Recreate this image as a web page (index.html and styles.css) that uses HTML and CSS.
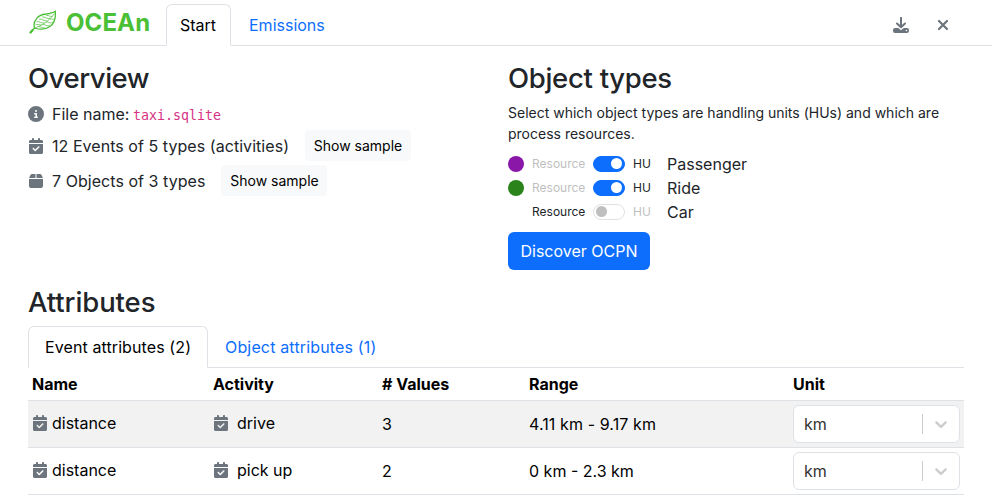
FILE: index.html
```html
<!DOCTYPE html>
<html lang="en">
<head>
<meta charset="utf-8">
<title>OCEAn</title>
<link rel="stylesheet" href="styles.css">
</head>
<body>
<svg class="defs" aria-hidden="true">
  <symbol id="calendar" viewBox="0 0 448 512"><path d="M128 0c17.700 0 32 14.300 32 32V64H288V32c0-17.700 14.300-32 32-32s32 14.300 32 32V64h48c26.500 0 48 21.500 48 48v48H0V112C0 85.500 21.500 64 48 64H96V32c0-17.700 14.300-32 32-32zM0 192H448V464c0 26.500-21.500 48-48 48H48c-26.500 0-48-21.500-48-48V192zM329 305c9.400-9.400 9.400-24.600 0-33.900s-24.600-9.400-33.900 0l-95 95-47-47c-9.400-9.400-24.600-9.400-33.900 0s-9.400 24.600 0 33.900l64 64c9.400 9.400 24.600 9.400 33.900 0L329 305z"/></symbol>
  <symbol id="chevron" viewBox="0 0 20 20"><path d="M4.516 7.548c0.436-0.446 1.043-0.481 1.576 0l3.908 3.747 3.908-3.747c0.533-0.481 1.141-0.446 1.574 0 0.436 0.445 0.408 1.197 0 1.615-0.406 0.418-4.695 4.502-4.695 4.502-0.217 0.223-0.502 0.335-0.787 0.335s-0.570-0.112-0.789-0.335c0 0-4.287-4.084-4.695-4.502s-0.436-1.170 0-1.615z"/></symbol>
</svg>
<header class="topbar">
  <div class="brand">
    <svg class="leaf" viewBox="0 0 28 24"><path class="outline" d="M1.500 22.500 5.500 18M5.500 18C3.500 11 9 4.500 17 4 21 3.500 24 2.800 26.200 1.200 27 8 26 13 21 16.500 16 20 10 19.500 5.500 18Z"/><path class="stem" d="M1.500 22.500 3.500 20.200"/><path class="veins" d="M5.500 18C12 16 20 11.500 25 4M7 14.500C9 14 10 15 12 15M8 11.500C10 11 12 13.500 15 13M10.500 9C13 8.500 15 11.500 18 11M13.500 6.800C16 6.500 18 9.500 21 8.500M17.500 5.500C20 5 21 7 23 6.500M10 16.500C12 16.500 13 18.500 16 18M14 14.500C16 14 18 17 20.500 15.500M18 12C20 11.500 21 14.500 24 12M21.500 9C23 8.500 24 10 25.800 9"/></svg>
    <span>OCEAn</span>
  </div>
  <nav class="main-tabs"><a class="main-tab active">Start</a><a class="main-tab">Emissions</a></nav>
  <div class="actions">
    <svg class="download" viewBox="0 0 16 16"><path class="line" d="M8 .8V9.500M4 6.500 8 10.300 12 6.500"/><path d="M2 11H5.200L8 13.200 10.800 11H14a2 2 0 0 1 2 2v1a2 2 0 0 1-2 2H2a2 2 0 0 1-2-2v-1a2 2 0 0 1 2-2zM13.500 12.700a.8.800 0 1 0 0 1.600.8.800 0 0 0 0-1.600z"/></svg>
    <svg class="close" viewBox="0 0 12 12"><path d="M2 2 10 10M10 2 2 10"/></svg>
  </div>
</header>
<main>
  <div class="columns">
    <section>
      <h2 class="overview">Overview</h2>
      <div class="info file"><svg class="icon" viewBox="0 0 512 512"><path d="M256 512A256 256 0 1 0 256 0a256 256 0 1 0 0 512zM216 336h24V272H216c-13.300 0-24-10.700-24-24s10.700-24 24-24h48c13.300 0 24 10.700 24 24v88h8c13.300 0 24 10.700 24 24s-10.700 24-24 24H216c-13.300 0-24-10.700-24-24s10.700-24 24-24zm40-208a32 32 0 1 1 0 64 32 32 0 1 1 0-64z"/></svg><span>File name: <code>taxi.sqlite</code></span></div>
      <div class="info"><span class="count"><svg class="icon"><use href="#calendar"/></svg>12 Events of 5 types (activities)</span><button class="sample">Show sample</button></div>
      <div class="info"><span class="count"><svg class="icon" viewBox="0 0 448 512"><path d="M50.700 58.500 0 160H208V32H93.200c-18.200 0-34.400 10.300-42.500 26.500zM240 160H448L397.300 58.500C389.200 42.300 373 32 354.800 32H240V160zM448 192H0V416c0 35.300 28.700 64 64 64H384c35.300 0 64-28.700 64-64V192z"/></svg>7 Objects of 3 types</span><button class="sample">Show sample</button></div>
    </section>
    <section>
      <h2 class="types">Object types</h2>
      <p class="hint">Select which object types are handling units (HUs) and which are process resources.</p>
      <div class="type"><i class="dot purple"></i><span class="role off">Resource</span><i class="switch on"></i><span class="role hu">HU</span><span>Passenger</span></div>
      <div class="type"><i class="dot green"></i><span class="role off">Resource</span><i class="switch on"></i><span class="role hu">HU</span><span>Ride</span></div>
      <div class="type"><i class="dot"></i><span class="role">Resource</span><i class="switch"></i><span class="role hu off">HU</span><span>Car</span></div>
      <button class="primary">Discover OCPN</button>
    </section>
  </div>
  <section>
    <h2 class="attributes">Attributes</h2>
    <nav class="tabs"><a class="tab active">Event attributes (2)</a><a class="tab">Object attributes (1)</a></nav>
    <table>
      <colgroup><col class="c-name"><col class="c-activity"><col class="c-values"><col class="c-range"><col></colgroup>
      <thead><tr><th>Name</th><th>Activity</th><th># Values</th><th>Range</th><th>Unit</th></tr></thead>
      <tbody>
        <tr class="striped"><td><div class="cell"><svg class="icon"><use href="#calendar"/></svg>distance</div></td><td><div class="cell wide"><svg class="icon"><use href="#calendar"/></svg>drive</div></td><td>3</td><td class="range">4.11 km - 9.17 km</td><td><div class="select"><span>km</span><svg class="chevron"><use href="#chevron"/></svg></div></td></tr>
        <tr><td><div class="cell"><svg class="icon"><use href="#calendar"/></svg>distance</div></td><td><div class="cell wide"><svg class="icon"><use href="#calendar"/></svg>pick up</div></td><td>2</td><td>0 km - 2.3 km</td><td><div class="select"><span>km</span><svg class="chevron"><use href="#chevron"/></svg></div></td></tr>
      </tbody>
    </table>
  </section>
</main>
</body>
</html>
```
FILE: styles.css
```css
* { box-sizing: border-box; }
body { margin: 0; font: 16px/24px Inter, sans-serif; color: #212529; background: #fff; overflow: hidden; }
.defs { display: none; }
.topbar { height: 46px; border-bottom: 1px solid #dee2e6; display: flex; padding: 4px 28px 0; }
.brand { width: 138px; height: 37px; display: flex; align-items: center; color: #4bbf36; font-size: 24px; font-weight: 700; gap: 9px; }
.brand span { letter-spacing: .1px; }
.leaf { width: 28px; height: 24px; margin: -2px 0 0 1px; fill: none; stroke: #4bbf36; stroke-linecap: round; }
.outline { stroke-width: 1.300; }
.stem { stroke-width: 2.200; }
.veins { stroke-width: .7; }
.main-tabs { display: flex; height: 42px; }
.main-tab { padding: 8px 17px; border: 1px solid transparent; color: #0d6efd; }
.main-tab.active, .tab.active { color: #000; background: #fff; border-color: #dee2e6 #dee2e6 #fff; }
.main-tab.active { width: 65px; padding: 8px 13px; border-radius: 6px 6px 0 0; }
.actions { margin-left: auto; display: flex; align-items: center; gap: 28px; height: 42px; padding-right: 15px; fill: #6c757d; }
.download { width: 16px; height: 16px; fill-rule: evenodd; }
.line { fill: none; stroke: #6c757d; stroke-width: 2; stroke-linecap: round; stroke-linejoin: round; }
.close { width: 12px; height: 12px; stroke: #6c757d; stroke-width: 2.2; stroke-linecap: round; }
main { padding: 16px 28px 0; }
h2 { margin: 0 0 8px; font-size: 27.500px; line-height: 33.600px; font-weight: 450; }
.overview { letter-spacing: -.45px; }
.types { letter-spacing: -.3px; }
.attributes { letter-spacing: -.1px; margin-bottom: 6px; }
.columns { display: grid; grid-template-columns: 480px 1fr; height: 224px; }
.info { display: flex; align-items: center; height: 31px; margin-bottom: 4px; }
.info.file { height: 24px; margin: -2px 0 4px; }
.count { display: flex; align-items: center; padding-top: 2px; letter-spacing: .05px; }
.icon { width: 16px; height: 16px; fill: #6c757d; margin-right: 8px; flex: none; }
code { font: 13.300px "DejaVu Sans Mono", monospace; color: #d63384; margin-left: -1px; }
button { font-family: inherit; border: 0; }
.sample { width: 106px; height: 31px; padding: 0; margin-left: 16px; border-radius: 4px; font-size: 14px; background: #f8f9fa; color: #000; }
.hint { margin: -2px 0 8px; font-size: 14px; line-height: 21px; }
.type { display: flex; align-items: center; height: 24px; }
.dot { width: 16px; height: 16px; border-radius: 50%; margin-right: 8px; }
.purple { background: #8b17a8; }
.green { background: #2b831b; }
.role { font-size: 12px; width: 61px; padding-top: 1px; }
.role.hu { width: 34px; }
.off { color: #bfbfbf; }
.switch { width: 32px; height: 16px; border: 1px solid #dee2e6; border-radius: 8px; margin-right: 8px; display: flex; align-items: center; padding: 0 2px; }
.switch::before { content: ""; width: 11px; height: 11px; border-radius: 50%; background: #bfbfbf; }
.switch.on { background: #0d6efd; border-color: #0d6efd; justify-content: flex-end; }
.switch.on::before { background: #fff; }
.primary { display: block; margin-top: 8px; width: 142px; height: 38px; border-radius: 6px; padding: 0; font-size: 16px; color: #fff; background: #0d6efd; }
.tabs { display: flex; height: 42px; border-bottom: 1px solid #dee2e6; }
.tab { height: 42px; padding: 8px 16px; border: 1px solid transparent; color: #0d6efd; letter-spacing: .16px; white-space: nowrap; }
.tab.active { width: 180px; border-radius: 6px 6px 0 0; letter-spacing: .1px; }
table { width: 936px; table-layout: fixed; border-collapse: separate; border-spacing: 0; color: #000; }
.c-name { width: 181px; }
.c-activity { width: 169px; }
.c-values { width: 147px; }
.c-range { width: 264px; }
th, td { text-align: left; padding: 4px; border-bottom: 1px solid #dee2e6; vertical-align: middle; }
th { font-weight: 700; }
.range { letter-spacing: .1px; }
.striped td { background: #f2f2f2; }
.cell { display: flex; align-items: center; padding-bottom: 1px; }
.cell .icon { margin-right: 4px; }
.cell.wide .icon { margin-right: 8px; }
.select { width: 167px; height: 38px; border: 1px solid #dee2e6; border-radius: 6px; background: #fff; color: #333; display: flex; align-items: center; padding-left: 10px; }
.select span { flex: 1; }
.chevron { width: 37px; height: 20px; fill: #ccc; border-left: 1px solid #ccc; }
```
